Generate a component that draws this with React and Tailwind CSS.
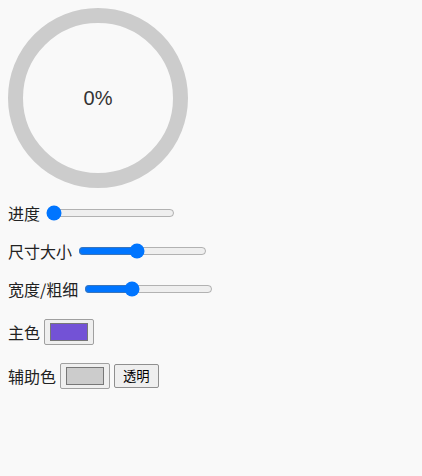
import { useState } from 'react'

const font = { fontFamily: '"Noto Sans CJK SC", "Microsoft YaHei", sans-serif' }

function Ring({ progress, size = 180, stroke = 15, color, track }) {
  const r = (size - stroke) / 2
  const c = 2 * Math.PI * r
  return (
    <svg width={size} height={size} className="block">
      <circle cx={size / 2} cy={size / 2} r={r} fill="none" stroke={track} strokeWidth={stroke} />
      <circle
        cx={size / 2}
        cy={size / 2}
        r={r}
        fill="none"
        stroke={color}
        strokeWidth={stroke}
        strokeDasharray={c}
        strokeDashoffset={c * (1 - progress / 100)}
        transform={`rotate(-90 ${size / 2} ${size / 2})`}
      />
      <text
        x={size / 2}
        y={size / 2}
        textAnchor="middle"
        dominantBaseline="central"
        fontSize="20"
        fill="#333"
        fontFamily="Liberation Sans, Arial, sans-serif"
      >
        {progress}%
      </text>
    </svg>
  )
}

const swatch =
  'w-[50px] h-[26px] border border-[#a0a0a0] rounded-[2px] bg-[#efefef] px-[2px] py-0 cursor-pointer [&::-webkit-color-swatch-wrapper]:px-[3px] [&::-webkit-color-swatch-wrapper]:py-[3px] [&::-webkit-color-swatch]:border [&::-webkit-color-swatch]:border-[#777] [&::-webkit-color-swatch]:rounded-none'

export default function App() {
  const [progress, setProgress] = useState(0)
  const [size, setSize] = useState(45)
  const [width, setWidth] = useState(35)
  const [main, setMain] = useState('#7352d6')
  const [sub, setSub] = useState('#cccccc')

  return (
    <div className="min-h-[476px] bg-[#f9f9f9] p-2 text-[16px] text-[#222]" style={font}>
      <Ring progress={progress} color={main} track={sub} />

      <div className="mt-[14px] h-[22px] flex items-center">
        <span>进度</span>
        <input
          type="range"
          min="0"
          max="100"
          value={progress}
          onChange={(e) => setProgress(+e.target.value)}
          className="ml-[6px] w-[129px]"
        />
      </div>

      <div className="mt-[16px] h-[22px] flex items-center">
        <span>尺寸大小</span>
        <input
          type="range"
          min="0"
          max="100"
          value={size}
          onChange={(e) => setSize(+e.target.value)}
          className="ml-[6px] w-[129px]"
        />
      </div>

      <div className="mt-[16px] h-[22px] flex items-center">
        <span>宽度/粗细</span>
        <input
          type="range"
          min="0"
          max="100"
          value={width}
          onChange={(e) => setWidth(+e.target.value)}
          className="ml-[6px] w-[129px]"
        />
      </div>

      <div className="mt-[18px] h-[27px] flex items-center">
        <span>主色</span>
        <input type="color" value={main} onChange={(e) => setMain(e.target.value)} className={`ml-[4px] ${swatch}`} />
      </div>

      <div className="mt-[17px] h-[27px] flex items-center">
        <span>辅助色</span>
        <input type="color" value={sub} onChange={(e) => setSub(e.target.value)} className={`ml-[4px] ${swatch}`} />
        <button
          onClick={() => setSub('#00000000')}
          className="ml-[4px] h-[24px] px-[8px] text-[13.33px] leading-none border border-[#8f8f8f] rounded-[2px] bg-[#efefef] text-black"
        >
          透明
        </button>
      </div>
    </div>
  )
}
